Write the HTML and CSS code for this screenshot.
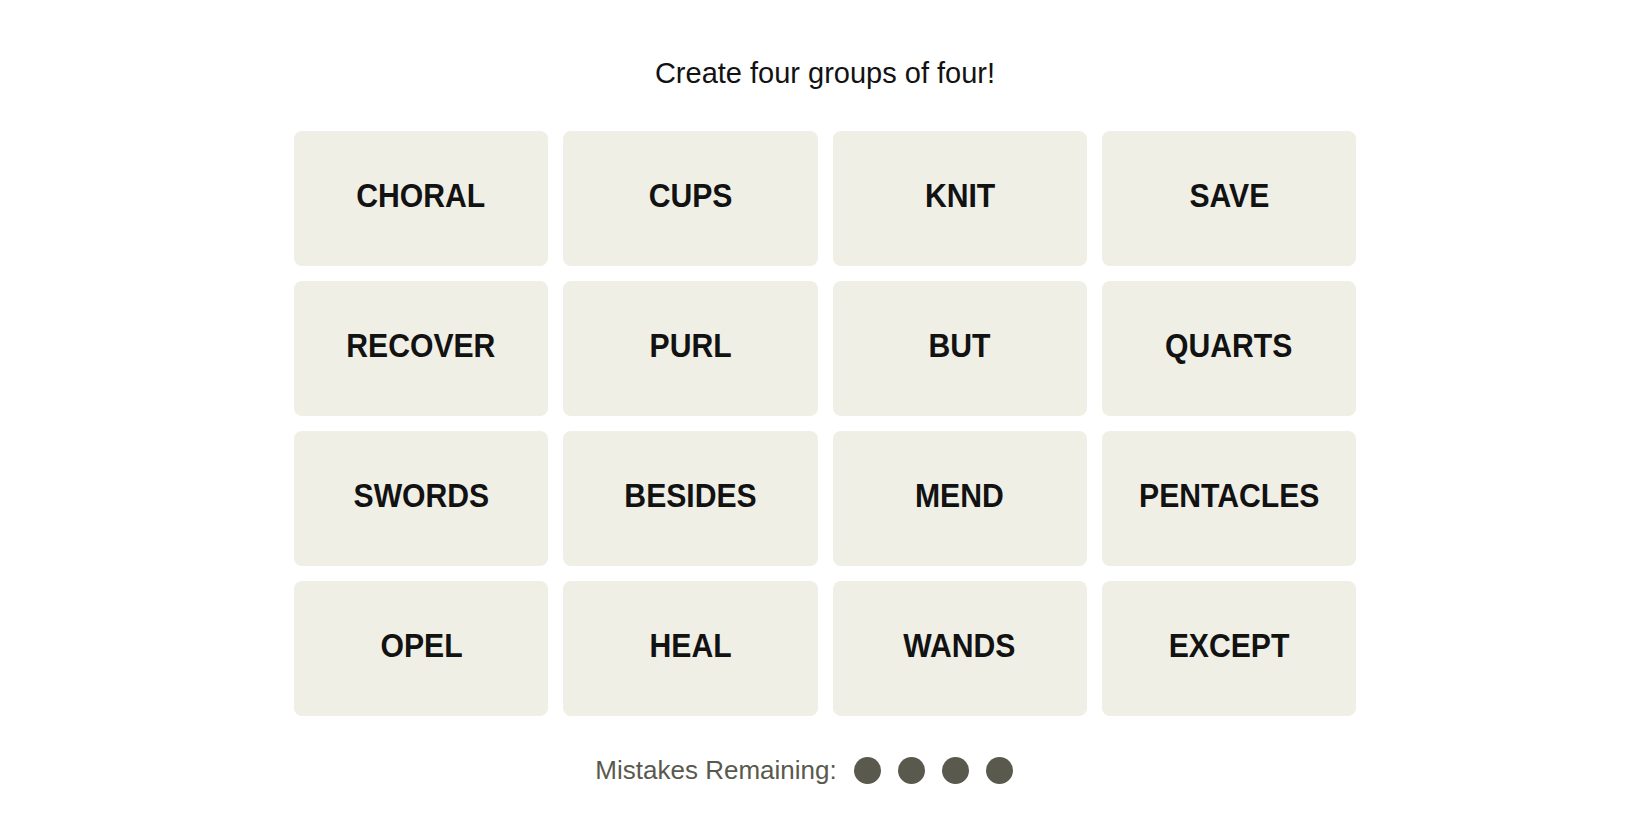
FILE: index.html
```html
<!DOCTYPE html>
<html lang="en">
<head>
<meta charset="utf-8">
<title>Connections</title>
<link rel="stylesheet" href="styles.css">
</head>
<body>
<main class="game">
  <p class="prompt">Create four groups of four!</p>
  <div class="board">
    <button class="tile"><span class="word">CHORAL</span></button>
    <button class="tile"><span class="word">CUPS</span></button>
    <button class="tile"><span class="word">KNIT</span></button>
    <button class="tile"><span class="word">SAVE</span></button>
    <button class="tile"><span class="word">RECOVER</span></button>
    <button class="tile"><span class="word">PURL</span></button>
    <button class="tile"><span class="word">BUT</span></button>
    <button class="tile"><span class="word">QUARTS</span></button>
    <button class="tile"><span class="word">SWORDS</span></button>
    <button class="tile"><span class="word">BESIDES</span></button>
    <button class="tile"><span class="word">MEND</span></button>
    <button class="tile"><span class="word">PENTACLES</span></button>
    <button class="tile"><span class="word">OPEL</span></button>
    <button class="tile"><span class="word">HEAL</span></button>
    <button class="tile"><span class="word">WANDS</span></button>
    <button class="tile"><span class="word">EXCEPT</span></button>
  </div>
  <div class="mistakes">
    <span class="mistakes-label">Mistakes Remaining:</span>
    <span class="dots">
      <span class="dot"></span>
      <span class="dot"></span>
      <span class="dot"></span>
      <span class="dot"></span>
    </span>
  </div>
</main>
</body>
</html>
```

FILE: styles.css
```css
* { box-sizing: border-box; }

html, body {
  margin: 0;
  padding: 0;
  background: #ffffff;
}

body {
  font-family: "Liberation Sans", Arial, sans-serif;
  color: #121212;
}

.game {
  display: flex;
  flex-direction: column;
  align-items: center;
  padding-top: 56px;
}

.prompt {
  margin: 0;
  font-size: 29px;
  line-height: 34px;
  font-weight: 400;
  color: #121212;
}

.board {
  margin-top: 41px;
  width: 1062px;
  display: grid;
  grid-template-columns: repeat(4, 1fr);
  grid-auto-rows: 135px;
  column-gap: 15px;
  row-gap: 15px;
}

.tile {
  border: none;
  margin: 0;
  padding: 0 0 5px;
  background: #efefe6;
  border-radius: 8px;
  font-family: "Liberation Sans", Arial, sans-serif;
  font-weight: 700;
  font-size: 33.5px;
  color: #121212;
  display: flex;
  align-items: center;
  justify-content: center;
}

.word {
  display: inline-block;
  transform: scaleX(0.9);
  white-space: nowrap;
}

.mistakes {
  margin-top: 39px;
  display: flex;
  align-items: center;
  gap: 17px;
}

.mistakes-label {
  font-size: 26px;
  line-height: 30px;
  color: #5a594e;
}

.dots {
  width: 201px;
  display: flex;
  align-items: center;
  gap: 17px;
}

.dot {
  width: 27px;
  height: 27px;
  border-radius: 50%;
  background: #5a594e;
}
```
